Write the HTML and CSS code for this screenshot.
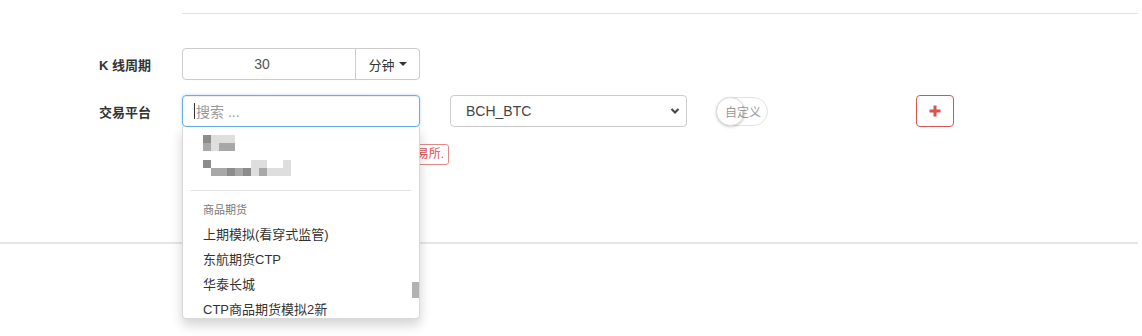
FILE: index.html
```html
<!DOCTYPE html>
<html>
<head>
<meta charset="UTF-8">
<title>交易平台设置</title>
<link rel="stylesheet" href="styles.css">
</head>
<body>
<div class="page">
	<div class="top-line"></div>

	<div class="form">
		<!-- K 线周期 -->
		<div class="row">
			<label class="row-label">K 线周期</label>
			<div class="input-group">
				<input type="text" class="period" value="30">
				<div class="addon">分钟 <span class="caret"></span></div>
			</div>
		</div>

		<!-- 交易平台 -->
		<div class="row">
			<label class="row-label">交易平台</label>
			<div class="search-wrap">
				<div class="search"><span class="cursor"></span>搜索 ...</div>
				<div class="dropdown">
					<div class="item mosaic">
						<div class="mrow"><span class="px d"></span><span class="px l"></span><span class="px l"></span><span class="px l"></span></div>
						<div class="mrow"><span class="px m"></span><span class="px l"></span><span class="px m"></span><span class="px m"></span></div>
					</div>
					<div class="item mosaic">
						<div class="mrow"><span class="px d"></span><span class="px w"></span><span class="px w"></span><span class="px w"></span><span class="px w"></span><span class="px w"></span><span class="px l"></span><span class="px l"></span><span class="px w"></span><span class="px w"></span><span class="px l"></span></div>
						<div class="mrow"><span class="px w"></span><span class="px m"></span><span class="px m"></span><span class="px d"></span><span class="px m"></span><span class="px d"></span><span class="px l"></span><span class="px m"></span><span class="px l"></span><span class="px l"></span><span class="px l"></span></div>
					</div>
					<div class="divider"></div>
					<div class="header">商品期货</div>
					<div class="item">上期模拟(看穿式监管)</div>
					<div class="item">东航期货CTP</div>
					<div class="item">华泰长城</div>
					<div class="item">CTP商品期货模拟2新</div>
					<div class="scroll-thumb"></div>
				</div>
			</div>

			<div class="select">
				<span>BCH_BTC</span>
				<svg width="10" height="8" viewBox="0 0 10 8"><path d="M1.5 2 L5 5.5 L8.5 2" fill="none" stroke="#444" stroke-width="2"/></svg>
			</div>

			<div class="switch">
				<span class="knob"></span>
				<span class="switch-text">自定义</span>
			</div>

			<button type="button" class="btn-add">
				<svg width="12" height="12" viewBox="0 0 12 12"><rect x="4.5" y="0.5" width="3" height="11" fill="#d9534f"/><rect x="0.5" y="4.5" width="11" height="3" fill="#d9534f"/></svg>
			</button>
		</div>

		<div class="help">
			<span class="help-label">提示: 可以添加多个交易平台, 请选择交易所.</span>
		</div>
	</div>

	<div class="bottom-line"></div>
</div>
</body>
</html>
```

FILE: styles.css
```css
html, body
{
	height: 100%;
}

body
{
	margin: 0;
	font-family: "Liberation Sans", "Noto Sans CJK SC", sans-serif;
	font-size: 13px;
	color: #333;
	background: #fff;
}

.page
{
	width: 1138px;
	min-height: 336px;
}

.top-line
{
	margin-left: 182px;
	height: 13px;
	border-bottom: 1px solid #d3e9ed;
}

.form
{
	padding-top: 34px;
}

.row
{
	display: flex;
	align-items: center;
	height: 32px;
	margin-bottom: 15px;
}

.row-label
{
	width: 83px;
	padding-left: 99px;
	font-weight: bold;
	font-size: 13px;
	color: #333;
}

.input-group
{
	display: flex;
	width: 238px;
	height: 32px;
	box-sizing: border-box;
	border: 1px solid #ccc;
	border-radius: 4px;
}

.period
{
	width: 173px;
	border: none;
	border-right: 1px solid #ccc;
	text-align: center;
	padding: 0 14px 0 0;
	font-family: inherit;
	font-size: 14px;
	color: #555;
	background: transparent;
	outline: none;
	box-sizing: border-box;
}

.addon
{
	flex: 1;
	display: flex;
	align-items: center;
	justify-content: center;
	gap: 4px;
	font-size: 13px;
	color: #333;
}

.caret
{
	display: inline-block;
	border-top: 4px solid #333;
	border-left: 4px solid transparent;
	border-right: 4px solid transparent;
}

.search-wrap
{
	position: relative;
	width: 238px;
	height: 32px;
	z-index: 10;
}

.search
{
	height: 32px;
	box-sizing: border-box;
	border: 1px solid #66afe9;
	border-radius: 4px;
	padding-left: 11px;
	display: flex;
	align-items: center;
	font-size: 14px;
	color: #999;
	box-shadow: inset 0 1px 1px rgba(0,0,0,.075), 0 0 3px rgba(102,175,233,.5);
}

.cursor
{
	width: 1px;
	height: 16px;
	background: #333;
	margin-right: 1px;
}

.dropdown
{
	position: absolute;
	top: 32px;
	left: 0;
	width: 238px;
	height: 192px;
	box-sizing: border-box;
	padding-top: 3px;
	background: #fff;
	border: 1px solid rgba(0,0,0,.15);
	border-top: none;
	border-radius: 0 0 4px 4px;
	box-shadow: 0 6px 12px rgba(0,0,0,.175);
	overflow: hidden;
}

.item
{
	height: 25px;
	line-height: 25px;
	padding-left: 20px;
	font-size: 13px;
	color: #333;
	white-space: nowrap;
}

.mosaic
{
	display: flex;
	flex-direction: column;
	justify-content: center;
}

.mrow
{
	display: flex;
	height: 8px;
}

.px
{
	width: 8px;
	height: 8px;
}

.px.d { background: #8c8c8c; }
.px.m { background: #a8a8a8; }
.px.l { background: #dedede; }
.px.w { background: #fff; }

.divider
{
	height: 1px;
	margin: 10px 8px 7px 7px;
	background: #e5e5e5;
}

.header
{
	height: 24px;
	line-height: 24px;
	padding-left: 20px;
	font-size: 11px;
	color: #777;
}

.scroll-thumb
{
	position: absolute;
	right: 0;
	top: 155px;
	width: 7px;
	height: 16px;
	background: #b3b3b3;
}

.select
{
	margin-left: 30px;
	width: 237px;
	height: 32px;
	box-sizing: border-box;
	border: 1px solid #ccc;
	border-radius: 4px;
	padding: 0 6px 0 15px;
	display: flex;
	align-items: center;
	justify-content: space-between;
	font-size: 14px;
	color: #444;
}

.switch
{
	position: relative;
	margin-left: 29px;
	width: 52px;
	height: 29px;
	box-sizing: border-box;
	border: 1px solid #e2e2e2;
	border-radius: 15px;
	display: flex;
	align-items: center;
}

.knob
{
	position: absolute;
	left: -1px;
	top: -1px;
	width: 27px;
	height: 27px;
	border-radius: 50%;
	background: #fff;
	border: 1px solid #ddd;
	box-shadow: 0 1px 3px rgba(0,0,0,.2);
}

.switch-text
{
	position: relative;
	margin-left: 8px;
	font-size: 12px;
	color: #999;
}

.btn-add
{
	margin-left: 148px;
	width: 38px;
	height: 32px;
	background: #fff;
	border: 1px solid #d9534f;
	border-radius: 4px;
	display: flex;
	align-items: center;
	justify-content: center;
	padding: 0;
	cursor: pointer;
}

.help
{
	margin-left: 182px;
	margin-top: 3px;
	padding-top: 2px;
	height: 21px;
}

.help-label
{
	display: inline-block;
	width: 267px;
	height: 21px;
	box-sizing: border-box;
	border: 1px solid #e08a88;
	border-radius: 3px;
	padding-right: 4px;
	line-height: 19px;
	text-align: right;
	font-size: 12px;
	color: #d9534f;
	white-space: nowrap;
	overflow: hidden;
}

.bottom-line
{
	margin-top: 77px;
	height: 0;
	border-top: 2px solid #e6e6e6;
}
```
